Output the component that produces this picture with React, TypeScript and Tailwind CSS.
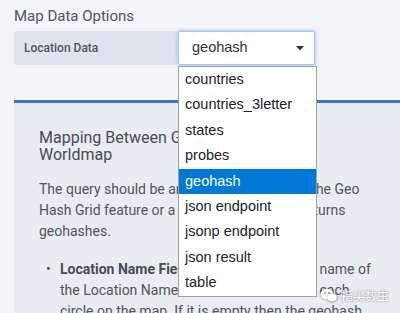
const OPTIONS = [
  "countries",
  "countries_3letter",
  "states",
  "probes",
  "geohash",
  "json endpoint",
  "jsonp endpoint",
  "json result",
  "table",
];

function Dropdown({ selected }: { selected: string }) {
  return (
    <div className="absolute left-0 top-[35px] z-10 w-[139px] border border-[#a3a3a3] bg-white font-['Liberation_Sans',Arial,sans-serif] text-[14.5px] text-[#222]">
      {OPTIONS.map((opt) => (
        <div
          key={opt}
          className={`h-[25.4px] pl-[6px] leading-[25.4px] whitespace-nowrap ${
            opt === selected ? "bg-[#0078d7] text-white" : ""
          }`}
        >
          {opt}
        </div>
      ))}
    </div>
  );
}

function Watermark() {
  return (
    <div className="absolute right-[11px] bottom-[10px] z-20 flex items-center gap-[3px] text-white [text-shadow:0_0_2px_rgba(0,0,0,0.55)]">
      <svg width="18" height="15" viewBox="0 0 18 15" className="drop-shadow-[0_0_1px_rgba(0,0,0,0.5)]">
        <ellipse cx="7" cy="6" rx="6.5" ry="5.2" fill="white" />
        <ellipse cx="12" cy="9.5" rx="5.2" ry="4.2" fill="white" stroke="#aaa" strokeWidth="0.5" />
        <circle cx="5" cy="5" r="0.9" fill="#888" />
        <circle cx="9" cy="5" r="0.9" fill="#888" />
      </svg>
      <span className="text-[12px] font-['Noto_Sans_CJK_SC',sans-serif] leading-none">指尖数虫</span>
    </div>
  );
}

export default function App() {
  return (
    <div className="relative h-[313px] w-[400px] overflow-hidden bg-[#f4f5f8] font-['Roboto',sans-serif] text-[#52545c]">
      <div className="pl-[14px] pt-[6px] text-[15px] leading-[20px]">Map Data Options</div>

      <div className="mt-[5px] flex pl-[14px]">
        <div className="flex h-[34px] w-[163px] items-center rounded-l-[2px] bg-[#dde4ed] pl-[10px] text-[12px] font-medium text-[#52545c]">
          Location Data
        </div>
        <div className="relative ml-[1px]">
          <div className="flex h-[34px] w-[137px] items-center justify-between rounded-[2px] border border-[#a8c7f5] bg-white pl-[13px] pr-[10px] shadow-[0_0_3px_1px_rgba(87,148,242,0.45)]">
            <span className="font-['Liberation_Sans',Arial,sans-serif] text-[14.5px] text-[#333]">geohash</span>
            <svg width="8" height="5" viewBox="0 0 8 5">
              <path d="M0 0 L8 0 L4 4.5 Z" fill="#333" />
            </svg>
          </div>
          <Dropdown selected="geohash" />
        </div>
      </div>

      <div className="ml-[14px] mt-[35px] h-[220px] border-t-[3px] border-[#3274d9] bg-[#e9ecf1] pl-[25px] pt-[26px]">
        <h3 className="text-[16px] leading-[17px] text-[#464c54]">
          Mapping Between Geohash and
          <br />
          Worldmap
        </h3>
        <p className="mt-[16px] text-[14px] leading-[20.8px]">
          The query should be an Elasticsearch using the Geo
          <br />
          Hash Grid feature or a geo_point field that returns
          <br />
          geohashes.
        </p>
        <ul className="mt-[18px] text-[14px] leading-[20.8px]">
          <li className="flex">
            <span className="w-[21px] shrink-0 pl-[7px]">•</span>
            <span>
              <b className="font-bold text-[#464c54]">Location Name Field (optional):</b> enter the name of
              <br />
              the Location Name column. Used to label each
              <br />
              circle on the map. If it is empty then the geohash
            </span>
          </li>
        </ul>
      </div>

      <Watermark />
    </div>
  );
}
